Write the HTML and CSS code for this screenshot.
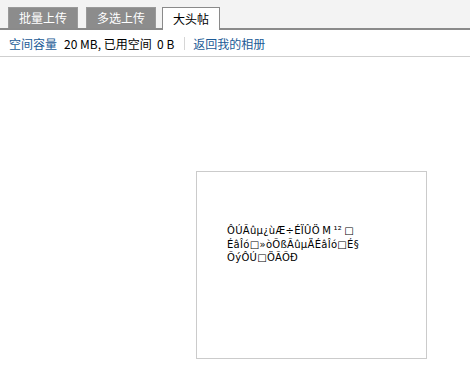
FILE: index.html
```html
<!DOCTYPE html>
<html>
<head>
<meta charset="utf-8">
<link rel="stylesheet" href="styles.css">
</head>
<body>
<div class="tabbar">
  <div class="tab">批量上传</div>
  <div class="tab">多选上传</div>
  <div class="tab active">大头帖</div>
</div>
<div class="info">
  <a class="link">空间容量</a>
  <span class="val">20 MB, 已用空间&nbsp; 0 B</span>
  <span class="sep"></span>
  <a class="link">返回我的相册</a>
</div>
<div class="stage">
  <div class="box">
    <div class="msg">ÔÚÃûµ¿ùÆ÷ÉÏÛÖ&thinsp;M&thinsp;¹²&thinsp;□<br>ÉâÎó□»òÕßÃûµÄÉâÎó□É§<br>ÕýÔÚ□ÖÃÕÐ</div>
  </div>
</div>
</body>
</html>
```
FILE: styles.css
```css
html, body { margin: 0; padding: 0; background: #fff; }
body { font-family: "Noto Sans CJK SC", "Liberation Sans", sans-serif; font-size: 12px; width: 470px; height: 384px; overflow: hidden; }
.tabbar { background: #f3f3f3; border-bottom: 2px solid #8a8a8a; display: flex; align-items: flex-end; padding-left: 8px; gap: 8px; box-sizing: border-box; height: 30px; }
.tab { height: 21px; line-height: 20px; padding: 0; background: #8c8c8c; color: #fff; border: 1px solid #9a9a9a; border-bottom: none; box-sizing: border-box; width: 70px; text-align: center; white-space: nowrap; }
.tab.active { background: #fff; color: #000; border-color: #8a8a8a; width: 58px; margin-left: -2px; height: 23px; line-height: 21px; margin-bottom: -2px; }
.info { display: flex; align-items: center; height: 27px; padding-left: 9px; border-bottom: 1px solid #cfcfcf; box-sizing: border-box; white-space: pre; }
.link { color: #1b5a96; text-decoration: none; }
.val { color: #000; margin-left: 7px; }
.sep { width: 1px; height: 13px; background: #d6d6d6; margin: 0 8px 0 10px; }
.stage { padding: 114px 0 0 196px; }
.box { width: 231px; height: 188px; border: 1px solid #cbcbcb; box-sizing: border-box; padding: 52px 0 0 30px; }
.msg { font-family: "DejaVu Sans", sans-serif; font-size: 10px; line-height: 13.5px; color: #000; letter-spacing: 0.3px; white-space: nowrap; }
```
